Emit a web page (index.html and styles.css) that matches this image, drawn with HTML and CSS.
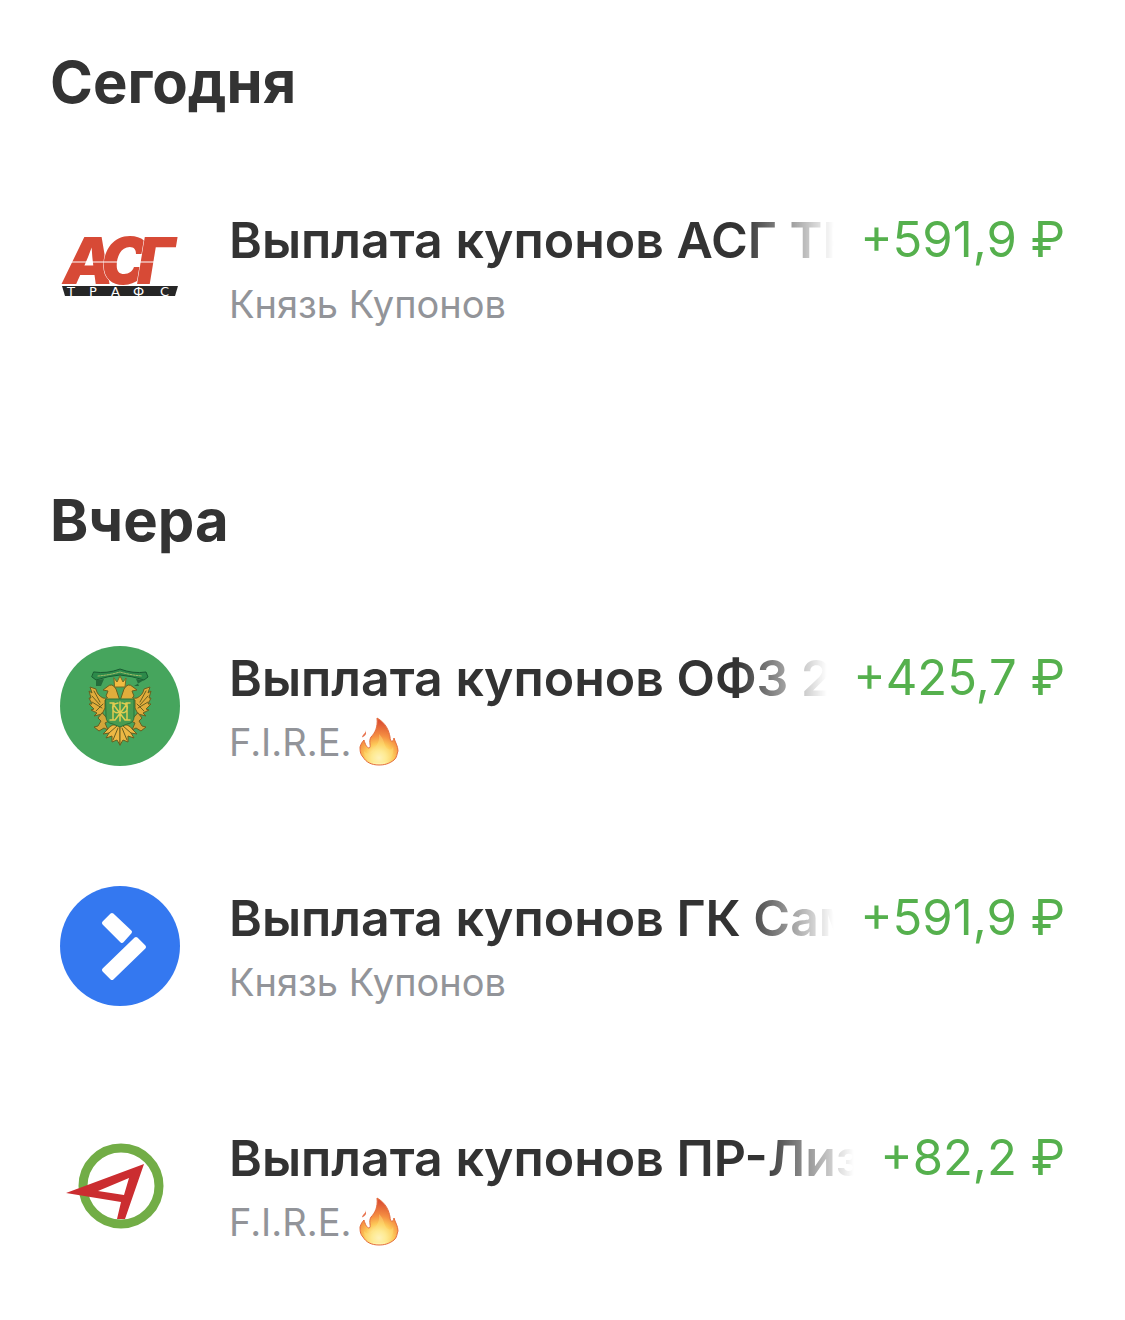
FILE: index.html
```html
<!DOCTYPE html>
<html lang="ru">
<head>
<meta charset="utf-8">
<meta name="viewport" content="width=device-width, initial-scale=1">
<title>Операции</title>
<link rel="stylesheet" href="styles.css">
</head>
<body>
<svg class="defs" aria-hidden="true">
  <defs>
    <radialGradient id="flame-fill" gradientUnits="userSpaceOnUse" cx="20" cy="41" r="36">
      <stop offset="0" stop-color="#fffde0"/>
      <stop offset=".2" stop-color="#fff0a0"/>
      <stop offset=".4" stop-color="#fdc958"/>
      <stop offset=".62" stop-color="#f58f42"/>
      <stop offset="1" stop-color="#dc5233"/>
    </radialGradient>
    <symbol id="flame" viewBox="0 0 40 50">
      <path fill="url(#flame-fill)" stroke="#e46c3e" stroke-width="1" d="M18 1C27 6 30 14 31 20C31 25 34 26 35 21C36 25 39 29 39 34C38 36 38 41 35 43C30 47 25 48 20 48C12 48 7 45 4 40C1 37 1 33 1 30C2 27 3 25 5 23C6 27 8 31 10 31C13 30 9 25 12 20C16 16 19 10 18 1Z"/>
      <path fill="#e8734f" d="M7 13C7 16 4 17 3 20C3 21 6 19 7 17Z"/>
      <path fill="#fde07c" opacity=".4" d="M20 17C26 23 25 30 29 32C32 34 34 31 34 29C36 38 31 46 20 46C10 46 5 42 5 34C9 38 13 37 15 33C17 28 21 26 20 17Z"/>
    </symbol>
  </defs>
</svg>
<main class="feed">
  <section class="day">
    <h2 class="day-title">Сегодня</h2>
    <ul class="list">
      <li class="row">
        <svg class="logo" viewBox="0 0 120 120" role="img" aria-label="АСГ ТРАФС">
          <text class="asg" x="3 41 77" y="76">АСГ</text>
          <path d="M10 54H108" stroke="#fff" stroke-width="1"/>
          <path d="M2 78H118L115 88H5Z" fill="#262626"/>
          <text class="trafs" x="7 29 51 73 100" y="88">ТРАФС</text>
        </svg>
        <div class="info">
          <div class="line">
            <h3 class="name">Выплата купонов АСГ ТРАФС</h3>
            <span class="amount">+591,9 ₽</span>
          </div>
          <p class="account">Князь Купонов</p>
        </div>
      </li>
    </ul>
  </section>
  <section class="day">
    <h2 class="day-title">Вчера</h2>
    <ul class="list">
      <li class="row">
        <svg class="logo" viewBox="0 0 120 120" role="img" aria-label="Минфин">
          <circle cx="60" cy="60" r="60" fill="#46a55d"/>
          <g stroke-linejoin="round" stroke-linecap="round">
            <path fill="#2c8a4a" stroke="#195c32" d="M34 26Q47 28 60 23Q73 28 86 26L88 31L84 34Q72 30 60 29Q48 30 36 34L32 31Z"/>
            <path fill="none" stroke="#a9bd68" stroke-width="1" stroke-dasharray="2 1" d="M38 30Q50 29 60 26Q70 29 82 30"/>
            <path fill="#246b3b" d="M36 34l8-1-3 7h-5zM84 34l-8-1 3 7h-5z"/>
            <g id="eagle-half">
              <path fill="#e0ad3c" stroke="#69601f" d="M59 52L56 43Q52 36 47 41L43 44L48 45L46 50Q50 53 43 52Q37 49 36 43L30 41L32 47L29 45L31 52L29 52L32 58L29 58L34 63L31 64L37 67L34 70L42 68L45 62L45 54H59Z"/>
              <path fill="none" stroke="#69601f" d="M34 45L40 56M32 50L40 59M32 56L42 62M36 65L43 58"/>
              <path fill="#d3a53a" stroke="#675e20" d="M42 67L38 72L41 75L38 80L34 81L39 85L44 82L48 84L45 77L49 75Z"/>
              <path fill="#edb844" stroke="#675e20" d="M60 80Q52 76 47 84L43 88L49 87L46 92L52 90L52 96L57 94L60 99"/>
              <path fill="none" stroke="#675e20" d="M49 87L57 80M53 94L58 82M60 98V80"/>
            </g>
            <use href="#eagle-half" transform="translate(120 0) scale(-1 1)"/>
            <path fill="#f1bc41" stroke="#796b24" d="M54 32L57 36L60 30L63 36L66 32L65 41H55Z"/>
            <path fill="#479b50" stroke="#2a723a" d="M46 53H74V71Q74 77 67 78L60 81L53 78Q46 77 46 71Z"/>
            <path fill="none" stroke="#dfcc50" stroke-width="1.5" d="M60 56V75M53 57V73M67 57V73M50 57H54M66 57H70M50 74H55M65 74H70M53 58L65 74M67 58L55 74M58 57Q51 58 53 64Q55 68 60 66Q65 68 67 64Q69 58 62 57"/>
          </g>
        </svg>
        <div class="info">
          <div class="line">
            <h3 class="name">Выплата купонов ОФЗ 26238</h3>
            <span class="amount">+425,7 ₽</span>
          </div>
          <p class="account">F.I.R.E.<svg class="flame" role="img" aria-label="огонь"><use href="#flame"/></svg></p>
        </div>
      </li>
      <li class="row">
        <svg class="logo" viewBox="0 0 120 120" role="img" aria-label="ГК Самолет">
          <circle cx="60" cy="60" r="60" fill="#3478f0"/>
          <path d="M52 29L70 46L62 55L44 37ZM76 53L84 61L52 92L44 84Z" fill="#fff" stroke="#fff" stroke-width="4" stroke-linejoin="round"/>
        </svg>
        <div class="info">
          <div class="line">
            <h3 class="name">Выплата купонов ГК Самолет</h3>
            <span class="amount">+591,9 ₽</span>
          </div>
          <p class="account">Князь Купонов</p>
        </div>
      </li>
      <li class="row">
        <svg class="logo" viewBox="0 0 120 120" role="img" aria-label="ПР-Лизинг">
          <circle cx="61" cy="60" r="38" fill="none" stroke="#72ad46" stroke-width="9"/>
          <path d="M6 67L84 38L65 93H57L61 76ZM38 65L64 69L69 52Z" fill="#cb2d30" fill-rule="evenodd"/>
        </svg>
        <div class="info">
          <div class="line">
            <h3 class="name">Выплата купонов ПР-Лизинг</h3>
            <span class="amount">+82,2 ₽</span>
          </div>
          <p class="account">F.I.R.E.<svg class="flame" role="img" aria-label="огонь"><use href="#flame"/></svg></p>
        </div>
      </li>
    </ul>
  </section>
</main>
</body>
</html>
```
FILE: styles.css
```css
* {
  box-sizing: border-box;
}

body {
  margin: 0;
  background: #fff;
  color: #333;
  font-family: Inter, "Liberation Sans", sans-serif;
}

.defs {
  position: absolute;
  width: 0;
  height: 0;
}

.feed {
  display: flex;
  flex-direction: column;
  gap: 50px;
}

.day-title {
  margin: 0;
  padding: 46px 50px 30px;
  font-size: 58px;
  line-height: 72px;
  font-weight: 700;
}

.list {
  margin: 0;
  padding: 0;
  list-style: none;
}

.row {
  display: flex;
  align-items: center;
  gap: 49px;
  height: 240px;
  padding: 0 60px;
}

.logo {
  flex: none;
  width: 120px;
  height: 120px;
}

.asg {
  fill: #d74a36;
  stroke: #fff;
  stroke-width: 1px;
  paint-order: stroke;
  font: italic 900 64px Inter, "Liberation Sans", sans-serif;
}

.trafs {
  fill: #fff;
  font: 400 13px "DejaVu Sans", sans-serif;
}

.info {
  flex: 1;
  min-width: 0;
  padding-top: 2px;
}

.line {
  display: flex;
  gap: 26px;
}

.name {
  flex: 1;
  min-width: 0;
  margin: 0;
  overflow: hidden;
  white-space: nowrap;
  font-size: 50px;
  line-height: 60px;
  font-weight: 600;
  -webkit-mask-image: linear-gradient(to left, transparent, #000 90px);
  mask-image: linear-gradient(to left, transparent, #000 90px);
}

.amount {
  flex: none;
  color: #55b04d;
  font-size: 49px;
  line-height: 60px;
  white-space: nowrap;
}

.account {
  display: flex;
  align-items: center;
  gap: 8px;
  margin: 10px 0 0;
  color: #929499;
  font-size: 38px;
  line-height: 48px;
}

.flame {
  width: 40px;
  height: 50px;
  margin: -1px 0;
}
```
